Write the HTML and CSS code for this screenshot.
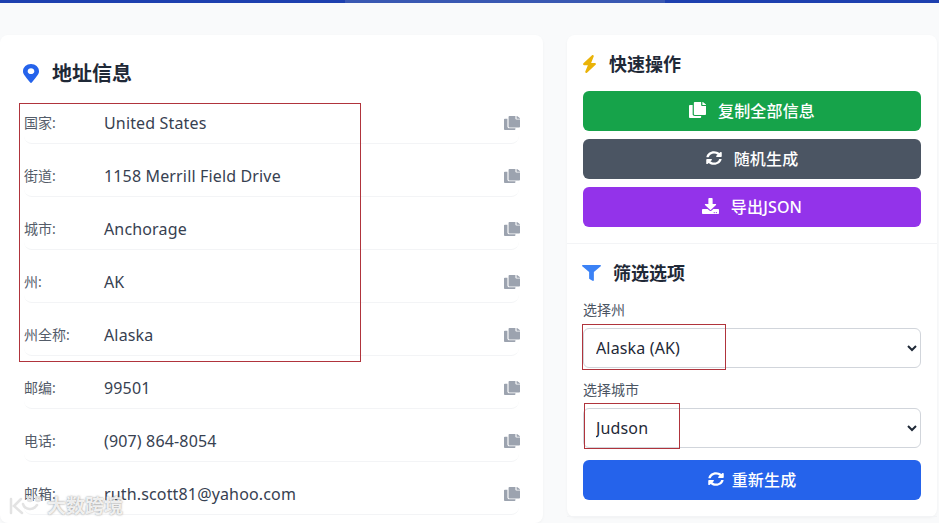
FILE: index.html
```html
<!DOCTYPE html>
<html lang="zh-CN">
<head>
<meta charset="utf-8">
<title>地址信息</title>
<link rel="stylesheet" href="styles.css">
</head>
<body>
<svg class="sprite" aria-hidden="true">
  <symbol id="i-pin" viewBox="0 0 384 512" preserveAspectRatio="none"><path d="M172.268 501.67C26.97 291.031 0 262.429 0 192 0 85.961 85.961 0 192 0s192 85.961 192 192c0 70.429-26.97 99.031-172.268 309.67-9.535 13.774-29.93 13.773-39.464 0zM192 272c44.183 0 80-35.817 80-80s-35.817-80-80-80-80 35.817-80 80 35.817 80 80 80z"/></symbol>
  <symbol id="i-bolt" viewBox="0 0 448 512" preserveAspectRatio="none"><path d="M349.4 44.6c5.9-13.7 1.5-29.7-10.6-38.5s-28.6-8.1-39.9 1.8l-256 224c-10 8.8-13.6 22.9-8.9 35.3S50.7 288 64 288H175.5L98.6 467.4c-5.9 13.7-1.5 29.7 10.6 38.5s28.6 8.1 39.9-1.8l256-224c10-8.8 13.6-22.9 8.9-35.3s-16.6-20.7-30-20.7H272.5L349.4 44.6z"/></symbol>
  <symbol id="i-copy" viewBox="0 0 448 512" preserveAspectRatio="none"><path d="M320 448v40c0 13.255-10.745 24-24 24H24c-13.255 0-24-10.745-24-24V120c0-13.255 10.745-24 24-24h72v296c0 30.879 25.121 56 56 56h168zm0-344V0H152c-13.255 0-24 10.745-24 24v368c0 13.255 10.745 24 24 24h272c13.255 0 24-10.745 24-24V128H344c-13.2 0-24-10.8-24-24zm120.971-31.029L375.029 7.029A24 24 0 0 0 358.059 0H352v96h96v-6.059a24 24 0 0 0-7.029-16.97z"/></symbol>
  <symbol id="i-sync" viewBox="0 0 512 512" preserveAspectRatio="none"><path d="M370.72 133.28C339.458 104.008 298.888 87.962 255.848 88c-77.458.068-144.328 53.178-162.791 126.85-1.344 5.363-6.122 9.15-11.651 9.15H24.103c-7.498 0-13.194-6.807-11.807-14.176C33.933 94.924 134.813 8 256 8c66.448 0 126.791 26.136 171.315 68.685L463.03 40.97C478.149 25.851 504 36.559 504 57.941V192c0 13.255-10.745 24-24 24H345.941c-21.382 0-32.09-25.851-16.971-40.971l41.75-41.749zM32 296h134.059c21.382 0 32.09 25.851 16.971 40.971l-41.75 41.75c31.262 29.273 71.835 45.319 114.876 45.28 77.418-.07 144.315-53.144 162.787-126.849 1.344-5.363 6.122-9.15 11.651-9.15h57.304c7.498 0 13.194 6.807 11.807 14.176C478.067 417.076 377.187 504 256 504c-66.448 0-126.791-26.136-171.315-68.685L48.97 471.03C33.851 486.149 8 475.441 8 454.059V320c0-13.255 10.745-24 24-24z"/></symbol>
  <symbol id="i-download" viewBox="0 0 512 512" preserveAspectRatio="none"><path d="M216 0h80c13.3 0 24 10.7 24 24v168h87.7c17.8 0 26.7 21.5 14.1 34.1L269.7 378.3c-7.5 7.5-19.8 7.5-27.3 0L90.1 226.1c-12.6-12.6-3.7-34.1 14.1-34.1H192V24c0-13.3 10.7-24 24-24zm296 376v112c0 13.3-10.7 24-24 24H24c-13.3 0-24-10.7-24-24V376c0-13.3 10.7-24 24-24h146.7l49 49c20.1 20.1 52.5 20.1 72.6 0l49-49H488c13.3 0 24 10.7 24 24zm-124 88c0-11-9-20-20-20s-20 9-20 20 9 20 20 20 20-9 20-20zm64 0c0-11-9-20-20-20s-20 9-20 20 9 20 20 20 20-9 20-20z"/></symbol>
  <symbol id="i-filter" viewBox="0 0 512 512" preserveAspectRatio="none"><path d="M487.976 0H24.028C2.71 0-8.047 25.866 7.058 40.971L192 225.941V432c0 7.831 3.821 15.17 10.237 19.662l80 55.98C298.02 518.69 320 507.493 320 487.98V225.941l184.947-184.97C520.021 25.896 509.338 0 487.976 0z"/></symbol>
</svg>

<header class="topbar">
  <span class="seg seg-a"></span><span class="seg seg-b"></span><span class="seg seg-c"></span>
</header>

<main class="layout">
  <section class="card address">
    <h2 class="address-title">
      <svg class="icon icon-pin"><use href="#i-pin"/></svg>
      <span>地址信息</span>
    </h2>
    <div class="rows">
      <div class="row"><span class="label">国家:</span><span class="value">United States</span><svg class="icon icon-copy"><use href="#i-copy"/></svg></div>
      <div class="row"><span class="label">街道:</span><span class="value">1158 Merrill Field Drive</span><svg class="icon icon-copy"><use href="#i-copy"/></svg></div>
      <div class="row"><span class="label">城市:</span><span class="value">Anchorage</span><svg class="icon icon-copy"><use href="#i-copy"/></svg></div>
      <div class="row"><span class="label">州:</span><span class="value">AK</span><svg class="icon icon-copy"><use href="#i-copy"/></svg></div>
      <div class="row"><span class="label">州全称:</span><span class="value">Alaska</span><svg class="icon icon-copy"><use href="#i-copy"/></svg></div>
      <div class="row"><span class="label">邮编:</span><span class="value">99501</span><svg class="icon icon-copy"><use href="#i-copy"/></svg></div>
      <div class="row"><span class="label">电话:</span><span class="value">(907) 864-8054</span><svg class="icon icon-copy"><use href="#i-copy"/></svg></div>
      <div class="row"><span class="label">邮箱:</span><span class="value">ruth.scott81@yahoo.com</span><svg class="icon icon-copy"><use href="#i-copy"/></svg></div>
    </div>
  </section>

  <aside class="card side">
    <section class="panel">
      <h3 class="panel-title">
        <svg class="icon icon-bolt"><use href="#i-bolt"/></svg>
        <span>快速操作</span>
      </h3>
      <div class="stack">
        <button class="btn btn-green"><svg class="icon btn-icon icon-wide"><use href="#i-copy"/></svg><span>复制全部信息</span></button>
        <button class="btn btn-slate"><svg class="icon btn-icon icon-sync"><use href="#i-sync"/></svg><span>随机生成</span></button>
        <button class="btn btn-purple"><svg class="icon btn-icon icon-wide"><use href="#i-download"/></svg><span>导出JSON</span></button>
      </div>
    </section>
    <section class="panel">
      <h3 class="panel-title">
        <svg class="icon icon-filter"><use href="#i-filter"/></svg>
        <span>筛选选项</span>
      </h3>
      <label class="field-label" for="state">选择州</label>
      <select class="field" id="state"><option>Alaska (AK)</option></select>
      <label class="field-label" for="city">选择城市</label>
      <select class="field" id="city"><option>Judson</option></select>
      <button class="btn btn-blue"><svg class="icon icon-sync btn-icon-tight"><use href="#i-sync"/></svg><span>重新生成</span></button>
    </section>
  </aside>
</main>

<div class="mark mark-a"></div>
<div class="mark mark-b"></div>
<div class="mark mark-c"></div>

<div class="watermark">
  <svg class="wm-logo" viewBox="0 0 34 20"><path d="M3 3v14M13 3 6 10l8 7"/><path d="M15 8c2 6 10 7 14 1"/><circle cx="22" cy="3" r="2"/><circle cx="30" cy="3" r="2"/></svg>
  <span>大数跨境</span>
</div>
</body>
</html>
```

FILE: styles.css
```css
* { box-sizing: border-box; }

html, body {
  height: 523px;
  overflow: hidden;
}

body {
  margin: 0;
  position: relative;
  background: #f9fafb;
  color: #1f2937;
  font-family: "Noto Sans", "Noto Sans CJK SC", sans-serif;
}

.sprite { display: none; }

.icon { display: block; fill: currentColor; flex: none; }

/* top bar */
.topbar { display: flex; height: 3px; }
.seg-a { width: 345px; background: #1e40af; }
.seg-b { width: 320px; background: #3a58b2; }
.seg-c { flex: 1; background: #1e40af; }

/* layout */
.layout {
  display: grid;
  grid-template-columns: 543px 370px;
  column-gap: 24px;
  align-items: start;
  height: 488px;
  padding-top: 32px;
}

.card {
  background: #fff;
  border-radius: 8px;
  box-shadow: 0 1px 3px rgba(0, 0, 0, .04);
}

/* address card */
.address { height: 488px; padding: 24px 24px 0; }

.address-title {
  display: flex;
  align-items: center;
  gap: 13px;
  height: 28px;
  margin: 0 0 4px;
  padding-top: 1px;
  font-size: 20px;
  font-weight: 700;
  line-height: 28px;
  color: #1f2937;
}

.icon-pin { width: 16px; height: 19px; margin-left: -1px; color: #2563eb; }

.row {
  display: flex;
  align-items: center;
  height: 53px;
  padding-top: 12px;
  border-bottom: 1px solid #f3f4f6;
  border-radius: 8px;
}

.label { width: 80px; flex: none; padding-bottom: 2px; font-size: 14px; color: #545c69; }
.value { flex: 1; font-size: 16px; letter-spacing: .15px; color: #374151; }
.icon-copy { width: 16px; height: 14px; margin-right: -1px; color: #9ca3af; }

/* side card */
.panel {
  padding: 16px;
  border-bottom: 1px solid #f3f4f6;
}

.panel-title {
  display: flex;
  align-items: center;
  gap: 12px;
  height: 28px;
  margin: 0 0 12px;
  padding-bottom: 2px;
  font-size: 18px;
  font-weight: 700;
  line-height: 26px;
  color: #1f2937;
}

.icon-bolt { width: 15px; height: 18px; margin-left: -1px; color: #eab308; }
.icon-filter { width: 19px; height: 16px; margin-left: -1px; color: #3b82f6; }

.stack { display: flex; flex-direction: column; gap: 8px; }

.btn {
  display: flex;
  align-items: center;
  justify-content: center;
  width: 100%;
  height: 40px;
  padding: 0 0 2px;
  border: 0;
  border-radius: 6px;
  color: #fff;
  font-family: inherit;
  font-size: 16px;
  font-weight: 500;
  letter-spacing: .15px;
}

.icon-wide { width: 17px; height: 16px; }
.icon-sync { width: 16px; height: 14px; }
.btn-icon { margin-right: 12px; }
.btn-icon-tight { margin-right: 8px; }

.btn-green { background: #16a34a; }
.btn-slate { background: #4b5563; }
.btn-purple { background: #9333ea; }
.btn-blue { background: #2563eb; }

.field-label {
  display: block;
  height: 20px;
  margin-bottom: 8px;
  font-size: 14px;
  line-height: 20px;
  color: #4b5563;
}

.field {
  display: block;
  width: 100%;
  height: 40px;
  margin-bottom: 12px;
  padding: 0 8px;
  border: 1px solid #d1d5db;
  border-radius: 6px;
  background: #fff;
  color: #1f2937;
  font-family: inherit;
  font-size: 16px;
  letter-spacing: .15px;
}

/* annotation boxes drawn over the screenshot */
.mark { position: absolute; border: 1px solid #b0343c; pointer-events: none; }
.mark-a { left: 19px; top: 103px; width: 342px; height: 259px; }
.mark-b { left: 582px; top: 324px; width: 144px; height: 46px; }
.mark-c { left: 584px; top: 403px; width: 96px; height: 46px; }

/* watermark */
.watermark {
  position: absolute;
  left: 8px;
  top: 494px;
  display: flex;
  align-items: center;
  gap: 5px;
  color: rgba(255, 255, 255, .85);
  font-size: 19px;
  font-weight: 700;
  line-height: 24px;
  text-shadow: 0 0 2px rgba(90, 90, 90, .75);
}

.wm-logo {
  width: 34px;
  height: 20px;
  fill: none;
  stroke: rgba(225, 225, 225, .95);
  stroke-width: 2.5;
  stroke-linecap: round;
}
```
